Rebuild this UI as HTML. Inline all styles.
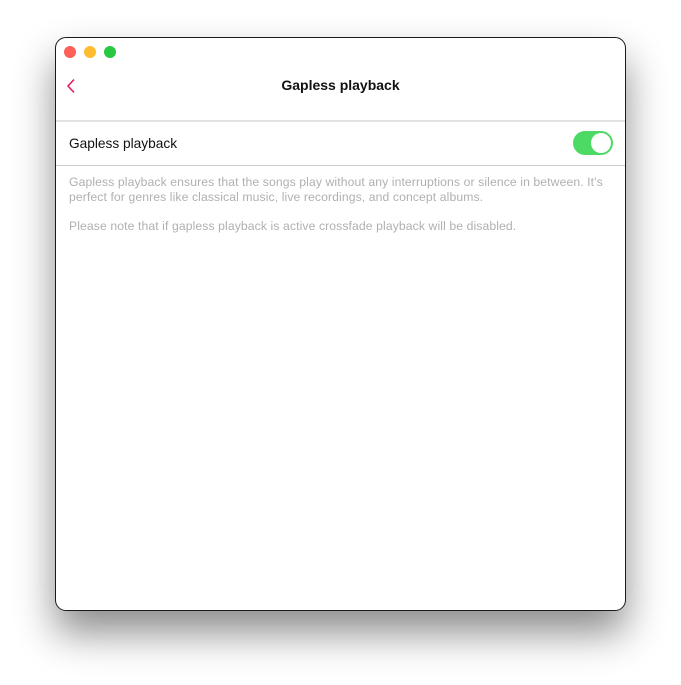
<!DOCTYPE html>
<html><head><style>
body{margin:0;width:681px;height:685px;background:#fff;font-family:"Liberation Sans",sans-serif;position:relative;overflow:hidden}
.win{position:absolute;left:55px;top:37px;width:569px;height:572px;border:1px solid #1a1a1a;border-radius:11px;background:#fff;box-shadow:0 22px 40px rgba(0,0,0,.45);overflow:hidden}
.tl{position:absolute;top:8px;width:12px;height:12px;border-radius:50%}
.title{position:absolute;top:39px;left:0;right:0;text-align:center;font-size:14px;font-weight:bold;color:#111}
.sep{position:absolute;left:0;right:0;height:1px;background:#d4d4d4}
.row{position:absolute;left:13px;top:98px;font-size:13.7px;color:#111}
.tog{position:absolute;left:517px;top:93px;width:40px;height:24px;border-radius:12px;background:#4cd964}
.tog:after{content:"";position:absolute;right:2px;top:2px;width:20px;height:20px;border-radius:50%;background:#fff}
.desc{position:absolute;left:13px;font-size:12.2px;letter-spacing:0.1px;color:#b0b0b0;line-height:15px;white-space:nowrap}
</style></head><body>
<div class="win">
<div class="tl" style="left:8px;background:#fe5f57"></div>
<div class="tl" style="left:28px;background:#febc2e"></div>
<div class="tl" style="left:48px;background:#28c840"></div>
<svg style="position:absolute;left:9px;top:40px" width="12" height="16"><path d="M9 1.5 L3 8 L9 14.5" stroke="#e8175d" stroke-width="1.5" fill="none"/></svg>
<div class="title">Gapless playback</div>
<div class="sep" style="top:82px;height:2px;background:#e2e2e2"></div>
<div class="row">Gapless playback</div>
<div class="tog"></div>
<div class="sep" style="top:127px;background:#cfcfcf"></div>
<div class="desc" style="top:137px">Gapless playback ensures that the songs play without any interruptions or silence in between. It's<br>perfect for genres like classical music, live recordings, and concept albums.</div>
<div class="desc" style="top:181px">Please note that if gapless playback is active crossfade playback will be disabled.</div>
</div>
</body></html>
